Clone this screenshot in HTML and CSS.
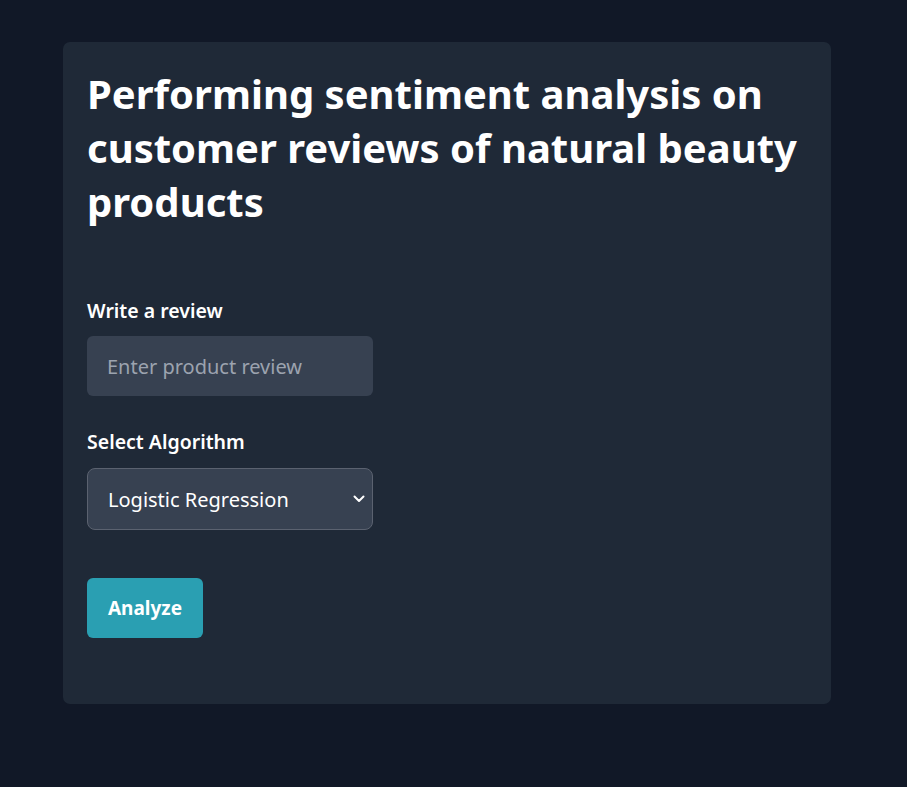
FILE: index.html
```html
<!DOCTYPE html>
<html lang="en">
<head>
<meta charset="utf-8">
<title>Sentiment Analysis</title>
<link rel="stylesheet" href="styles.css">
</head>
<body>
<main class="card">
  <h1 class="title">Performing sentiment analysis on customer reviews of natural beauty products</h1>
  <form class="form">
    <label class="label" for="review">Write a review</label>
    <input class="input" id="review" type="text" placeholder="Enter product review">
    <label class="label label-select" for="algo">Select Algorithm</label>
    <div class="select-wrap">
      <select class="select" id="algo">
        <option>Logistic Regression</option>
        <option>Naive Bayes</option>
        <option>SVM</option>
      </select>
      <svg class="chevron" width="12" height="8" viewBox="0 0 12 8"><path d="M1.5 1.5 L6 6 L10.5 1.5" fill="none" stroke="#ffffff" stroke-width="2" stroke-linecap="round" stroke-linejoin="round"/></svg>
    </div>
    <button class="button" type="button">Analyze</button>
  </form>
</main>
</body>
</html>
```
FILE: styles.css
```css
* { box-sizing: border-box; }
html, body { margin: 0; padding: 0; }
body {
  background: #111827;
  min-height: 787px;
  padding: 42px 0 0 63px;
  font-family: "Noto Sans", "Open Sans", sans-serif;
  color: #ffffff;
}
.card {
  width: 768px;
  height: 662px;
  background: #1f2937;
  border-radius: 7px;
  padding: 25px 24px 66px 24px;
}
.title {
  margin: 0;
  font-size: 40px;
  line-height: 54px;
  font-weight: 700;
  letter-spacing: 0;
  color: #ffffff;
}
.form {
  display: flex;
  flex-direction: column;
  align-items: flex-start;
  margin-top: 70px;
}
.label {
  font-size: 19.5px;
  line-height: 24px;
  font-weight: 600;
  color: #ffffff;
  margin-bottom: 13px;
}
.label-select { margin-top: 34px; margin-bottom: 14px; }
.input {
  width: 286px;
  height: 60px;
  border: none;
  border-radius: 6px;
  background: #374151;
  padding: 0 20px;
  font-family: inherit;
  font-size: 20px;
  color: #ffffff;
  outline: none;
}
.input::placeholder { color: #9ca3af; }
.select-wrap { position: relative; width: 286px; }
.select {
  appearance: none;
  -webkit-appearance: none;
  width: 286px;
  height: 62px;
  border: 1px solid #5b6270;
  border-radius: 8px;
  background: #374151;
  padding: 0 20px;
  font-family: inherit;
  font-size: 20px;
  color: #ffffff;
  outline: none;
}
.chevron {
  position: absolute;
  right: 8px;
  top: 27px;
  pointer-events: none;
}
.button {
  margin-top: 48px;
  width: 116px;
  height: 60px;
  border: none;
  border-radius: 6px;
  background: #2a9fb2;
  color: #ffffff;
  font-family: inherit;
  font-size: 19px;
  font-weight: 700;
  cursor: pointer;
}
```
